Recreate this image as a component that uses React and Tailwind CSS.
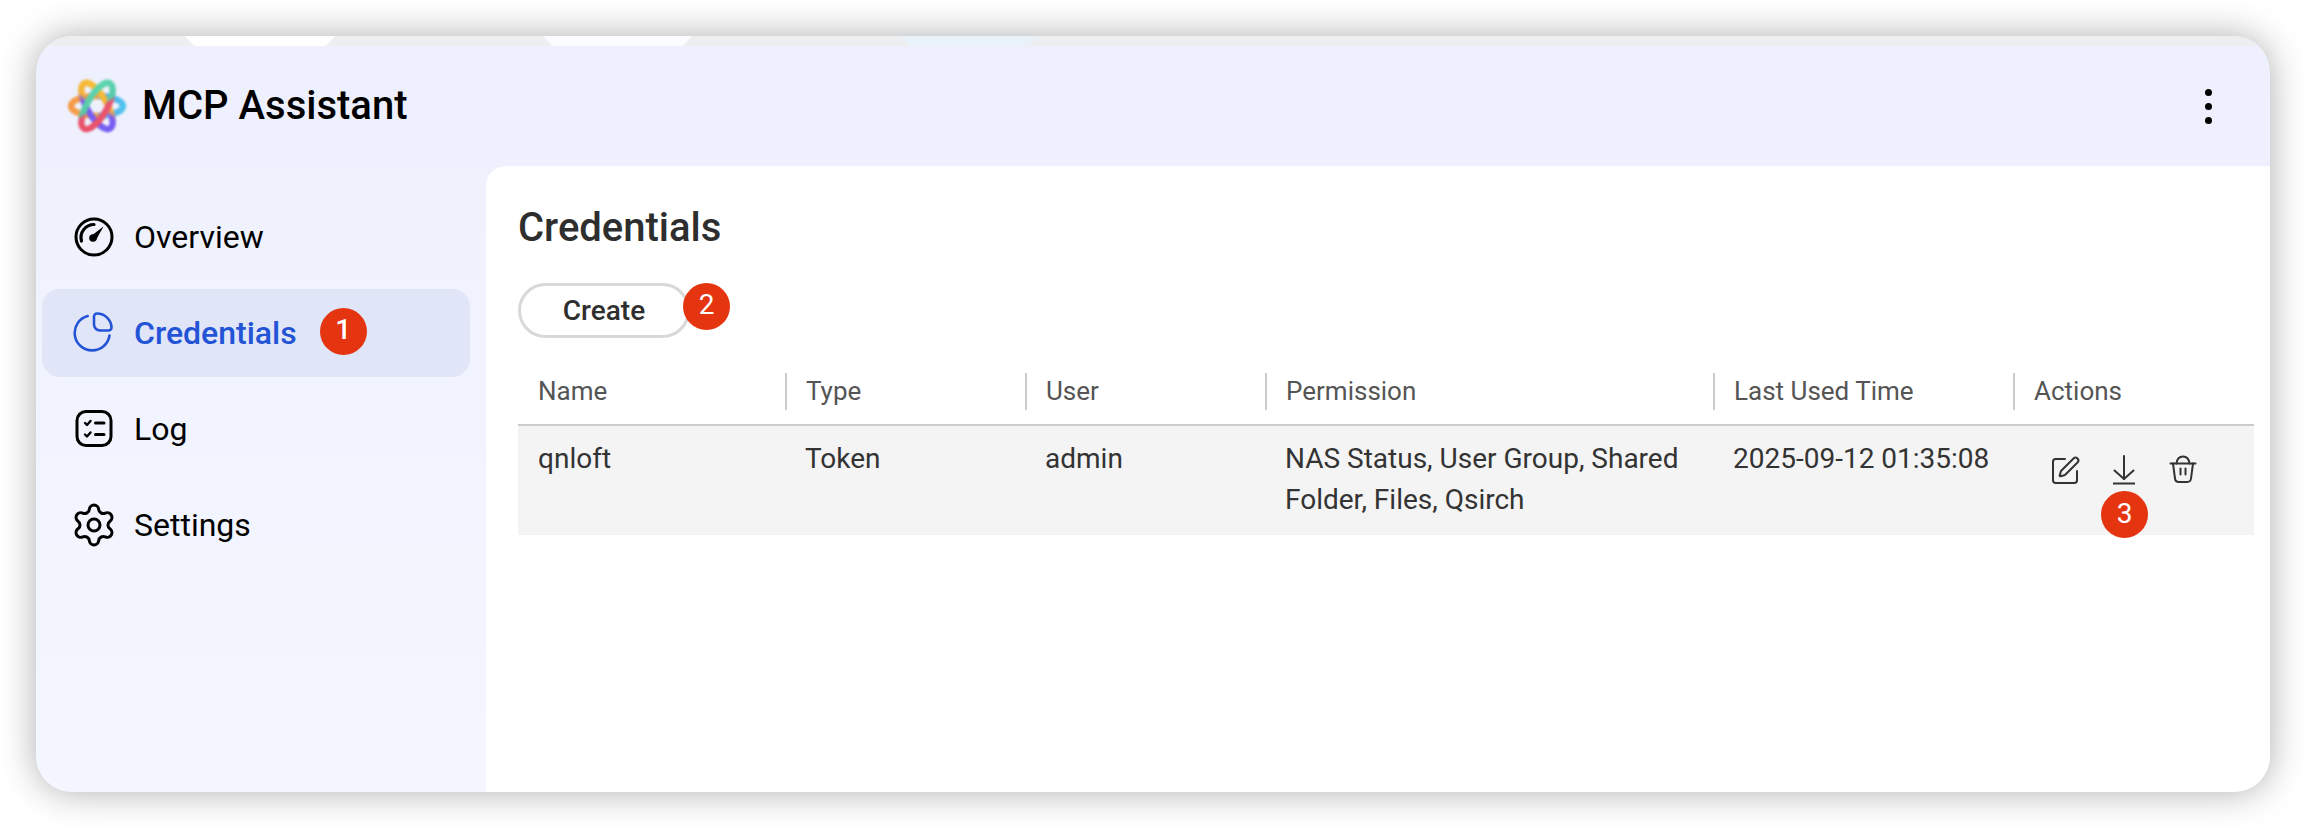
// App.jsx
import { Settings, SquarePen } from 'lucide-react'
import clsx from 'clsx'

function Logo() {
  return (
    <svg width="64" height="64" viewBox="0 0 64 64" fill="none" className="blur-[1px]">
      <defs>
        <linearGradient id="petalA" x1="18" y1="8" x2="46" y2="56" gradientUnits="userSpaceOnUse">
          <stop offset="0" stopColor="#f7c52e" />
          <stop offset="0.45" stopColor="#f5b13c" />
          <stop offset="0.55" stopColor="#7a5cf0" />
          <stop offset="1" stopColor="#6f63f5" />
        </linearGradient>
        <linearGradient id="petalB" x1="46" y1="8" x2="18" y2="56" gradientUnits="userSpaceOnUse">
          <stop offset="0" stopColor="#62dcb0" />
          <stop offset="0.5" stopColor="#58c9a8" />
          <stop offset="0.55" stopColor="#e8566e" />
          <stop offset="1" stopColor="#ea4f6b" />
        </linearGradient>
        <linearGradient id="petalC" x1="2" y1="32" x2="62" y2="32" gradientUnits="userSpaceOnUse">
          <stop offset="0" stopColor="#f59a4a" />
          <stop offset="0.5" stopColor="#f5a03f" />
          <stop offset="0.55" stopColor="#5aa5f0" />
          <stop offset="1" stopColor="#4fc7ec" />
        </linearGradient>
      </defs>
      <ellipse cx="32" cy="32" rx="26" ry="10" stroke="url(#petalC)" strokeWidth="6.500" />
      <ellipse cx="32" cy="32" rx="26" ry="10" stroke="url(#petalA)" strokeWidth="6.500" transform="rotate(60 32 32)" />
      <ellipse cx="32" cy="32" rx="26" ry="10" stroke="url(#petalB)" strokeWidth="6.500" transform="rotate(-60 32 32)" />
    </svg>
  )
}

function GaugeIcon() {
  return (
    <svg width="42" height="42" viewBox="0 0 42 42" fill="none" stroke="currentColor" strokeWidth="3" strokeLinecap="round">
      <circle cx="21" cy="21" r="18" />
      <path d="M8.500 25a13 13 0 0 1 12.500-16.500" strokeWidth="3.200" />
      <path d="M18 20 30.500 10.500 23 24Z" fill="currentColor" stroke="none" />
      <circle cx="20" cy="22" r="3.800" fill="currentColor" stroke="none" />
    </svg>
  )
}

function PieIcon() {
  return (
    <svg width="42" height="42" viewBox="0 0 42 42" fill="none" stroke="currentColor" strokeWidth="2.600" strokeLinecap="round">
      <path d="M14.700 4A17.500 17.500 0 1 0 36.500 23.500" />
      <path d="M21 4.500a3 3 0 0 1 3-3A14.500 14.500 0 0 1 38.500 15.500a3 3 0 0 1-3 3H27a6 6 0 0 1-6-6Z" />
    </svg>
  )
}

function LogIcon() {
  return (
    <svg width="42" height="42" viewBox="0 0 42 42" fill="none" stroke="currentColor" strokeWidth="3" strokeLinecap="round" strokeLinejoin="round">
      <rect x="4" y="3.500" width="34" height="34" rx="9" />
      <path d="M12 15 14 17 17.500 13" strokeWidth="2.400" />
      <path d="M12 26.500 14 28.500 17.500 24.500" strokeWidth="2.400" />
      <path d="M22.500 15H31" />
      <path d="M22.500 26.500H31" />
    </svg>
  )
}

function DownloadIcon() {
  return (
    <svg width="26" height="30" viewBox="0 0 26 30" fill="none" stroke="currentColor" strokeWidth="2" strokeLinecap="round" strokeLinejoin="round">
      <path d="M13 1v23" />
      <path d="M3.500 15.500 13 24l9.500-8.500" />
      <path d="M2 28.500h22" strokeLinecap="butt" />
    </svg>
  )
}

function TrashIcon() {
  return (
    <svg width="28" height="30" viewBox="0 0 28 30" fill="none" stroke="currentColor" strokeWidth="2" strokeLinecap="round" strokeLinejoin="round">
      <path d="M1.500 8.500h25" />
      <path d="M4 8.500 6 23.500A4 4 0 0 0 10 27h8a4 4 0 0 0 4-3.500l2-15" />
      <path d="M7.500 8.500C8 4 10.500 1.500 14 1.500s6 2.500 6.500 7" />
      <path d="M11.500 13.500v6" />
      <path d="M16.500 13.500v6" />
    </svg>
  )
}

function Badge({ n, className }) {
  return (
    <span className={clsx('flex h-[47px] w-[47px] shrink-0 items-center justify-center rounded-full bg-[#e53510] pb-[3px] text-[28px] text-white', className)}>
      {n}
    </span>
  )
}

const navItems = [
  { label: 'Overview', icon: <GaugeIcon /> },
  { label: 'Credentials', icon: <PieIcon />, active: true },
  { label: 'Log', icon: <LogIcon /> },
  { label: 'Settings', icon: <Settings size={48} strokeWidth={1.5} className="-m-[3px]" /> },
]

const columns = [
  { label: 'Name', width: 'w-[267px]' },
  { label: 'Type', width: 'w-[240px]' },
  { label: 'User', width: 'w-[240px]' },
  { label: 'Permission', width: 'w-[448px]' },
  { label: 'Last Used Time', width: 'w-[300px]' },
  { label: 'Actions', width: 'flex-1' },
]

export default function App() {
  return (
    <div className="h-[828px] w-[2306px] overflow-hidden bg-white pl-9 pt-9 font-['Roboto',sans-serif]">
      <div className="flex h-[756px] w-[2234px] flex-col overflow-hidden rounded-[36px] bg-[#eef0fd] shadow-[0_0_36px_rgba(0,0,0,0.32)]">
        {/* browser tabs peeking out above the app */}
        <div className="flex h-[10px] shrink-0 bg-[#eceef0] pl-[149px]">
          <div className="h-full w-[150px] bg-white [clip-path:polygon(0_0,100%_0,94%_100%,6%_100%)]" />
          <div className="ml-[208px] h-full w-[149px] bg-[#fbfcff] [clip-path:polygon(0_0,100%_0,94%_100%,6%_100%)]" />
          <div className="ml-[209px] h-full w-[135px] bg-[#e9f1f9] [clip-path:polygon(0_0,100%_0,94%_100%,6%_100%)]" />
        </div>

        <header className="flex h-[120px] shrink-0 items-center justify-between pl-[29px] pr-[58px]">
          <div className="flex items-center gap-[13px]">
            <Logo />
            <h1 className="text-[40px] font-medium text-black">MCP Assistant</h1>
          </div>
          <div className="flex flex-col gap-[7px]">
            <span className="h-[7px] w-[7px] rounded-full bg-black" />
            <span className="h-[7px] w-[7px] rounded-full bg-black" />
            <span className="h-[7px] w-[7px] rounded-full bg-black" />
          </div>
        </header>

        <div className="flex min-h-0 flex-1">
          <aside className="flex w-[450px] shrink-0 flex-col gap-2 bg-gradient-to-b from-[#eff1fd] to-[#f4f7ff] pl-[6px] pr-4 pt-[27px]">
            {navItems.map((item) => (
              <div
                key={item.label}
                className={clsx(
                  'flex h-[88px] items-center gap-[19px] rounded-[18px] pl-[31px] text-[32px]',
                  item.active ? 'bg-[#e0e5f8] font-medium text-[#2354d6]' : 'text-black'
                )}
              >
                {item.icon}
                <span>{item.label}</span>
                {item.active && <Badge n="1" className="ml-1 -translate-y-[2px]" />}
              </div>
            ))}
          </aside>

          <main className="min-w-0 flex-1 rounded-tl-[20px] bg-white pl-8 pr-4 pt-[35px]">
            <h2 className="text-[40px] font-medium leading-[54px] text-[#2e2e2e]">Credentials</h2>
            <div className="mt-[28px] flex items-start">
              <button className="h-[55px] w-[172px] rounded-full border-[3px] border-[#d8d8d8] bg-white text-[28px] font-medium text-[#2e2e2e]">
                Create
              </button>
              <Badge n="2" className="-ml-[7px]" />
            </div>

            <div className="mt-[35px] flex h-[53px] items-start border-b-2 border-[#cccccc] text-[26px] text-[#555555]">
              {columns.map((col, i) => (
                <div
                  key={col.label}
                  className={clsx('flex h-[37px] items-center', col.width, i > 0 ? 'border-l-2 border-[#cccccc] pl-[19px]' : 'pl-5')}
                >
                  {col.label}
                </div>
              ))}
            </div>

            <div className="flex h-[109px] bg-[#f4f4f4] pt-3 text-[28px] leading-[41px] text-[#333333]">
              <div className="w-[267px] pl-5">qnloft</div>
              <div className="w-[240px] pl-5">Token</div>
              <div className="w-[240px] pl-5">admin</div>
              <div className="w-[448px] pl-5">NAS Status, User Group, Shared Folder, Files, Qsirch</div>
              <div className="w-[300px] pl-5">2025-09-12 01:35:08</div>
              <div className="flex flex-1 items-start gap-[30px] pl-[36px] pt-[17px]">
                <SquarePen size={32} strokeWidth={1.5} />
                <div className="relative">
                  <DownloadIcon />
                  <Badge n="3" className="absolute left-[-10px] top-[36px]" />
                </div>
                <div className="ml-[2px]">
                  <TrashIcon />
                </div>
              </div>
            </div>
          </main>
        </div>
      </div>
    </div>
  )
}
